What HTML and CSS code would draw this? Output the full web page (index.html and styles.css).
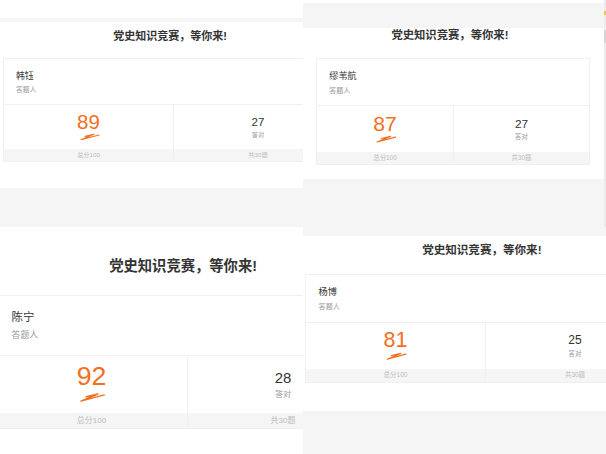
FILE: index.html
```html
<!DOCTYPE html>
<html lang="zh-CN">
<head>
  <meta charset="UTF-8">
  <meta name="viewport" content="width=device-width, initial-scale=1.0">
  <title>党史知识竞赛</title>
  <link rel="stylesheet" href="styles.css">
</head>
<body>
  <div class="collage">

    <div class="tile tile-tl">
      <div class="strip"></div>
      <div class="panel">
        <div class="sheet">
          <h2 class="title">党史知识竞赛，等你来!</h2>
          <div class="card">
            <div class="card-head">
              <div class="name">韩钰</div>
              <div class="role">答题人</div>
            </div>
            <div class="stats">
              <div class="cell">
                <div class="cell-body">
                  <div class="score">89</div>
                  <svg class="scribble" viewBox="0 0 22 9"><path d="M7 4.4 L16 2.3 L3 7.8 L21 3" /></svg>
                </div>
                <div class="cell-foot">总分100</div>
              </div>
              <div class="cell">
                <div class="cell-body">
                  <div class="count">27</div>
                  <div class="label">答对</div>
                </div>
                <div class="cell-foot">共30题</div>
              </div>
            </div>
          </div>
        </div>
      </div>
    </div>

    <div class="tile tile-tr">
      <div class="strip"></div>
      <div class="panel">
        <div class="sheet">
          <h2 class="title">党史知识竞赛，等你来!</h2>
          <div class="card">
            <div class="card-head">
              <div class="name">缪苇航</div>
              <div class="role">答题人</div>
            </div>
            <div class="stats">
              <div class="cell">
                <div class="cell-body">
                  <div class="score">87</div>
                  <svg class="scribble" viewBox="0 0 22 9"><path d="M7 4.4 L16 2.3 L3 7.8 L21 3" /></svg>
                </div>
                <div class="cell-foot">总分100</div>
              </div>
              <div class="cell">
                <div class="cell-body">
                  <div class="count">27</div>
                  <div class="label">答对</div>
                </div>
                <div class="cell-foot">共30题</div>
              </div>
            </div>
          </div>
        </div>
      </div>
      <div class="scrollbar"><span class="scroll-mark"></span><span class="scroll-thumb"></span></div>
    </div>

    <div class="tile tile-bl">
      <div class="strip"></div>
      <div class="panel">
        <div class="sheet">
          <h2 class="title">党史知识竞赛，等你来!</h2>
          <div class="card">
            <div class="card-head">
              <div class="name">陈宁</div>
              <div class="role">答题人</div>
            </div>
            <div class="stats">
              <div class="cell">
                <div class="cell-body">
                  <div class="score">92</div>
                  <svg class="scribble" viewBox="0 0 22 9"><path d="M7 4.4 L16 2.3 L3 7.8 L21 3" /></svg>
                </div>
                <div class="cell-foot">总分100</div>
              </div>
              <div class="cell">
                <div class="cell-body">
                  <div class="count">28</div>
                  <div class="label">答对</div>
                </div>
                <div class="cell-foot">共30题</div>
              </div>
            </div>
          </div>
        </div>
      </div>
    </div>

    <div class="tile tile-br">
      <div class="strip"></div>
      <div class="panel">
        <div class="sheet">
          <h2 class="title">党史知识竞赛，等你来!</h2>
          <div class="card">
            <div class="card-head">
              <div class="name">杨博</div>
              <div class="role">答题人</div>
            </div>
            <div class="stats">
              <div class="cell">
                <div class="cell-body">
                  <div class="score">81</div>
                  <svg class="scribble" viewBox="0 0 22 9"><path d="M7 4.4 L16 2.3 L3 7.8 L21 3" /></svg>
                </div>
                <div class="cell-foot">总分100</div>
              </div>
              <div class="cell">
                <div class="cell-body">
                  <div class="count">25</div>
                  <div class="label">答对</div>
                </div>
                <div class="cell-foot">共30题</div>
              </div>
            </div>
          </div>
        </div>
      </div>
    </div>

  </div>
</body>
</html>
```

FILE: styles.css
```css
body {
  margin: 0;
  font-family: "Liberation Sans", "Noto Sans CJK SC", sans-serif;
  background-color: #fff;
}

.collage {
  display: grid;
  grid-template-columns: 303px 303px;
  grid-template-rows: 227px 227px;
}

/* each tile is one screenshot, drawn at its own scale (--u) */
.tile {
  position: relative;
  overflow: hidden;
  background-color: #f5f5f5;
  display: flex;
  flex-direction: column;
}

.tile-tl {
  --u: 10px;
  --strip: 18px;
  --gap: 4px;
  --title-top: 3px;
  --pad-bottom: 26px;
  --card-left: 3px;
  --cell: 170px;
}

.tile-tr {
  --u: 10.3px;
  --strip: 3px;
  --gap: 25px;
  --title-top: -4px;
  --pad-bottom: 14px;
  --card-left: 13px;
  --cell: 137px;
}

.tile-bl {
  --u: 13px;
  --strip: 0px;
  --gap: 0px;
  --title-top: 25px;
  --pad-bottom: 60px;
  --card-left: -5px;
  --cell: 192px;
}

.tile-br {
  --u: 10.5px;
  --strip: 0px;
  --gap: 9px;
  --title-top: 3px;
  --pad-bottom: 28px;
  --card-left: 2px;
  --cell: 180px;
}

.strip {
  height: var(--strip);
  background-color: #fff;
  flex-shrink: 0;
}

.panel {
  margin-top: var(--gap);
  padding-bottom: var(--pad-bottom);
  background-color: #fff;
  display: flex;
  flex-direction: column;
  flex-shrink: 0;
}

.sheet {
  margin-left: var(--card-left);
  width: calc(var(--cell) * 2);
  display: flex;
  flex-direction: column;
}

.title {
  margin: var(--title-top) 0 calc(var(--u) * 1.1);
  padding-right: calc(var(--u) * 0.6);
  font-size: calc(var(--u) * 1.1);
  line-height: calc(var(--u) * 2.2);
  font-weight: bold;
  color: #333;
  text-align: center;
  white-space: nowrap;
}

.card {
  border: 1px solid #f0f0f0;
}

.card-head {
  box-sizing: border-box;
  height: calc(var(--u) * 4.6);
  padding: calc(var(--u) * 1.1) calc(var(--u) * 1.2) 0;
  border-bottom: 1px solid #f0f0f0;
}

.name {
  font-size: calc(var(--u) * 0.88);
  line-height: calc(var(--u) * 1.2);
  color: #333;
}

.role {
  margin-top: calc(var(--u) * 0.2);
  font-size: calc(var(--u) * 0.68);
  line-height: calc(var(--u) * 1.2);
  color: #999;
}

.stats {
  display: grid;
  grid-template-columns: 1fr 1fr;
}

.cell {
  display: flex;
  flex-direction: column;
}

.cell + .cell {
  border-left: 1px solid #f0f0f0;
}

.cell-body {
  height: calc(var(--u) * 4.4);
  display: flex;
  flex-direction: column;
  align-items: center;
}

.score {
  margin-top: calc(var(--u) * 0.6);
  font-size: calc(var(--u) * 2.05);
  line-height: calc(var(--u) * 2.1);
  color: #f36f21;
}

.scribble {
  width: calc(var(--u) * 2.2);
  height: calc(var(--u) * 0.9);
}

.scribble path {
  fill: none;
  stroke: #f36f21;
  stroke-width: 1.1;
  stroke-linecap: round;
  stroke-linejoin: round;
}

.count {
  margin-top: calc(var(--u) * 1);
  font-size: calc(var(--u) * 1.15);
  line-height: calc(var(--u) * 1.4);
  color: #333;
}

.label {
  margin-top: calc(var(--u) * 0.1);
  font-size: calc(var(--u) * 0.62);
  line-height: calc(var(--u) * 1);
  color: #999;
}

.cell-foot {
  height: calc(var(--u) * 1.2);
  line-height: calc(var(--u) * 1.2);
  background-color: #f5f5f5;
  font-size: calc(var(--u) * 0.62);
  color: #bbb;
  text-align: center;
}

/* browser scrollbar edge caught in the second screenshot */
.scrollbar {
  position: absolute;
  top: 0;
  right: 0;
  width: 2px;
  height: 100%;
  background-color: #ececec;
}

.scroll-mark {
  position: absolute;
  top: 11px;
  left: 0;
  width: 2px;
  height: 4px;
  background-color: #f2c744;
}

.scroll-thumb {
  position: absolute;
  top: 30px;
  left: 0;
  width: 2px;
  height: 13px;
  background-color: #d6d6d6;
}
```
